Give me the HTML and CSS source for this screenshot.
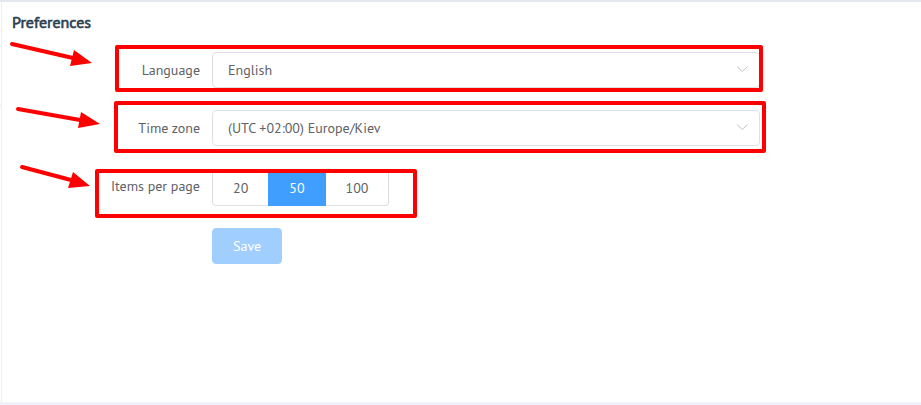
FILE: index.html
```html
<!DOCTYPE html>
<html lang="en">
<head>
<meta charset="utf-8">
<title>Preferences</title>
<link rel="stylesheet" href="styles.css">
</head>
<body>
<div class="rail"></div>
<main class="panel">
  <h1 class="title">Preferences</h1>
  <form class="form">
    <div class="row">
      <label class="label" for="language">Language</label>
      <div class="select">
        <select id="language"><option>English</option></select>
        <svg class="chevron" viewBox="0 0 12 8" aria-hidden="true"><path d="M1 1.5 6.3 6.5 11.6 1.5"/></svg>
      </div>
    </div>
    <div class="row">
      <label class="label" for="timezone">Time zone</label>
      <div class="select">
        <select id="timezone"><option>(UTC +02:00) Europe/Kiev</option></select>
        <svg class="chevron" viewBox="0 0 12 8" aria-hidden="true"><path d="M1 1.5 6.3 6.5 11.6 1.5"/></svg>
      </div>
    </div>
    <div class="row">
      <span class="label" id="items-label">Items per page</span>
      <div class="radios" role="radiogroup" aria-labelledby="items-label">
        <label class="radio"><input type="radio" name="items"><span>20</span></label>
        <label class="radio"><input type="radio" name="items" checked><span>50</span></label>
        <label class="radio"><input type="radio" name="items"><span>100</span></label>
      </div>
    </div>
    <div class="row">
      <span class="label"></span>
      <button class="save" type="submit" disabled>Save</button>
    </div>
  </form>
</main>
<svg class="notes" width="780" height="230" viewBox="0 0 780 230" aria-hidden="true">
  <g class="frames">
    <rect x="117" y="47" width="644" height="43"/>
    <rect x="116" y="103" width="648" height="48"/>
    <rect x="97" y="171" width="318" height="45"/>
  </g>
  <g class="shafts">
    <path d="M12 44 73 58"/>
    <path d="M18 109 80 120"/>
    <path d="M22 167 71 180"/>
  </g>
  <g class="heads">
    <path d="M74 50 92 63 70 66Z"/>
    <path d="M81 112 100 124 78 128Z"/>
    <path d="M73 172 90 186 68 188Z"/>
  </g>
</svg>
</body>
</html>
```
FILE: styles.css
```css
* {
  box-sizing: border-box;
}

body {
  margin: 0;
  min-height: 100vh;
  display: flex;
  border-top: 2px solid #e4e7eb;
  border-bottom: 3px solid #f0f2f7;
  background: #fff;
  color: #606266;
  font-family: "PT Sans", "Noto Sans", sans-serif;
  font-size: 14px;
}

.rail {
  width: 1px;
  height: 104px;
  border-bottom: 1px solid #e4e7ed;
}

.panel {
  flex: 1;
  padding: 10px;
  border-left: 1px solid #ebeef5;
}

.title {
  margin: 0 0 20px;
  color: #2c3e50;
  font-size: 16px;
  line-height: 20px;
  font-weight: 400;
  -webkit-text-stroke: 0.04em currentColor;
}

.form {
  display: flex;
  flex-direction: column;
  gap: 22px;
  max-width: 748px;
}

.row {
  display: flex;
  gap: 12px;
}

.label {
  flex: 0 0 188px;
  line-height: 36px;
  text-align: right;
}

.select {
  position: relative;
  flex: 1;
}

.select select {
  display: block;
  width: 100%;
  height: 36px;
  padding: 0 36px 0 15px;
  appearance: none;
  border: 1px solid #dcdfe6;
  border-radius: 4px;
  background: #fff;
  color: inherit;
  font: inherit;
}

.chevron {
  position: absolute;
  top: 13px;
  right: 12px;
  width: 12px;
  height: 8px;
  overflow: visible;
  fill: none;
  stroke: #c0c4cc;
  pointer-events: none;
}

.radios {
  display: flex;
  padding-top: 2px;
}

.radio input {
  position: absolute;
  opacity: 0;
}

.radio span {
  display: block;
  padding: 0 20px;
  border: 1px solid #dcdfe6;
  border-left-width: 0;
  line-height: 34px;
}

.radio:first-child span {
  border-left-width: 1px;
  border-radius: 4px 0 0 4px;
}

.radio:last-child span {
  border-radius: 0 4px 4px 0;
}

.radio input:checked + span {
  border-color: #409eff;
  background: #409eff;
  box-shadow: -1px 0 0 #409eff;
  color: #fff;
}

.save {
  height: 36px;
  padding: 0 20px;
  border: 1px solid #a0cfff;
  border-radius: 4px;
  background: #a0cfff;
  color: #fff;
  font: inherit;
}

.notes {
  position: absolute;
  top: 0;
  left: 0;
  pointer-events: none;
}

.frames,
.shafts {
  fill: none;
  stroke: #f00;
  stroke-width: 4;
  stroke-linecap: round;
  stroke-linejoin: round;
}

.heads {
  fill: #f00;
}
```
